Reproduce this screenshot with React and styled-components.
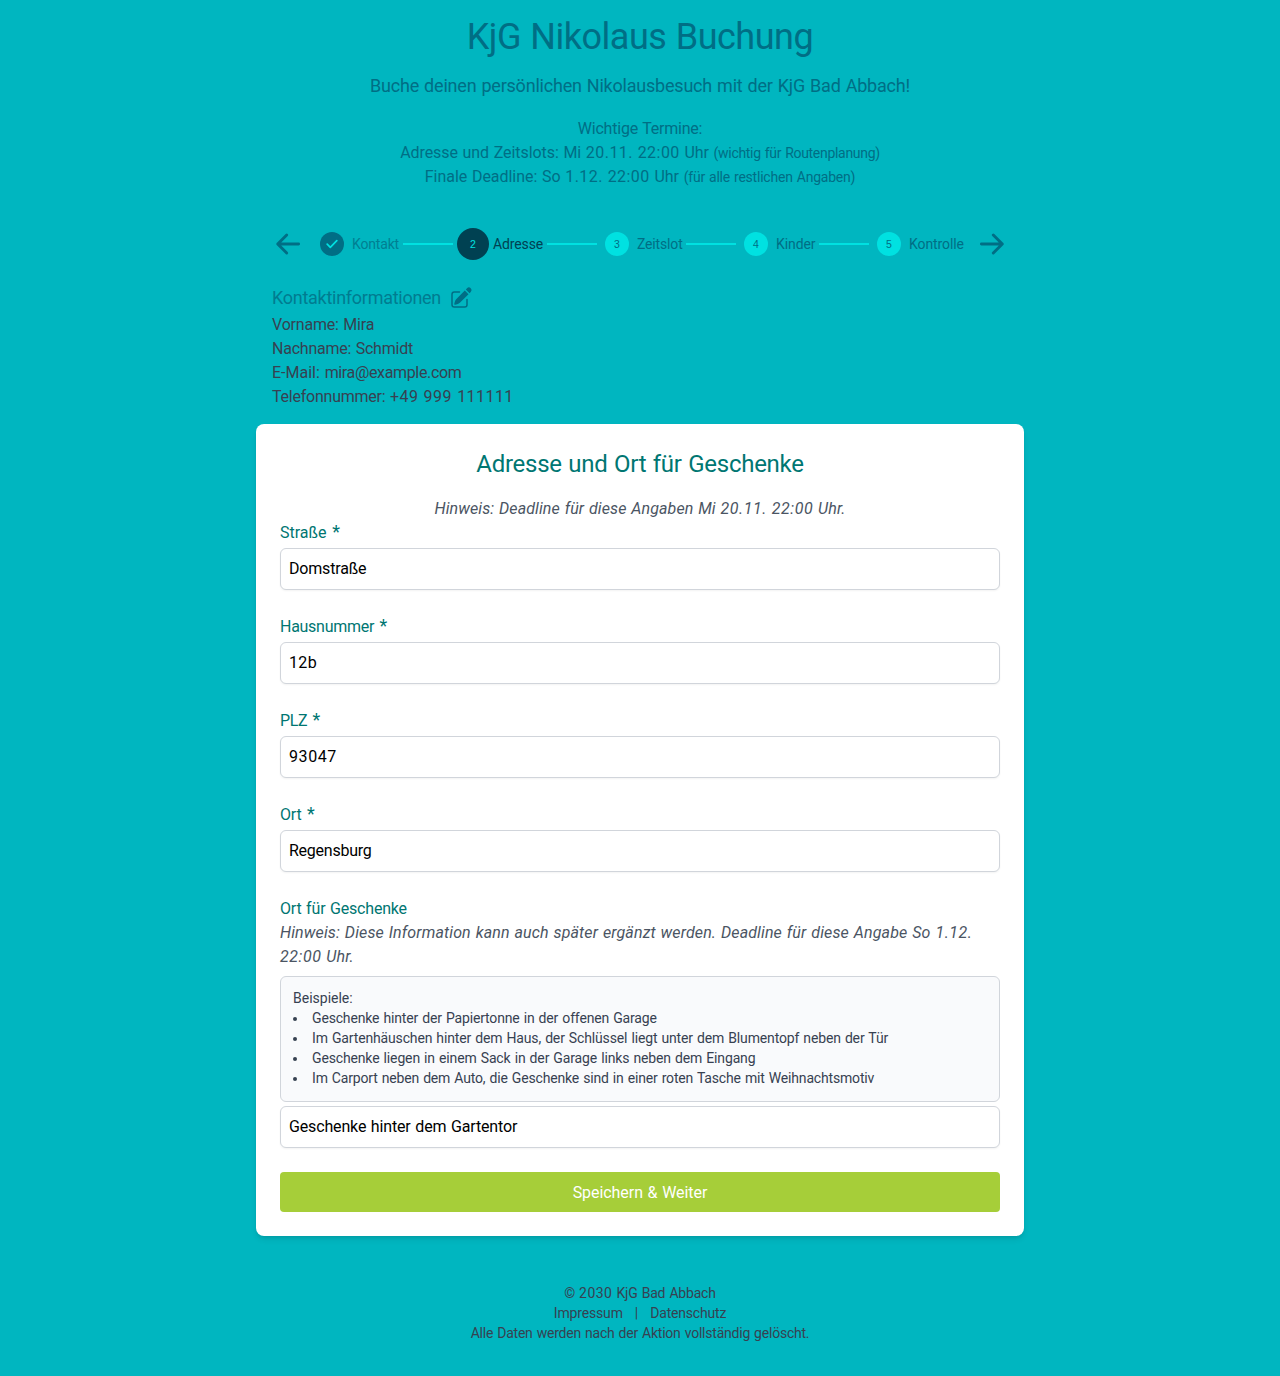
import React from 'react';
import styled, { createGlobalStyle, css } from 'styled-components';
import { HiPencilSquare } from 'react-icons/hi2';

const Global = createGlobalStyle`
  *, *::before, *::after { box-sizing: border-box; }
  body {
    margin: 0;
    background: #00b6c0;
    font-family: Roboto, "Liberation Sans", sans-serif;
    font-size: 16px;
    line-height: 24px;
    word-spacing: 0.05em;
    color: #374151;
  }
  h1, h2, h3, p, ul { margin: 0; padding: 0; font-weight: 400; }
`;

const tracking = css`letter-spacing: ${(p) => p.$ls || 0}px;`;
const bodyLine = css`
  padding-top: 1px;
  margin-bottom: -1px;
`;

const Page = styled.div`
  display: flex;
  flex-direction: column;
  align-items: center;
  min-height: 1376px;
  padding-top: 16px;
`;
const Header = styled.header`
  text-align: center;
  color: #006e85;
`;
const Title = styled.h1`
  ${bodyLine}
  font-size: 36px;
  line-height: 40px;
  ${tracking}
`;
const Subtitle = styled.p`
  margin: 16px 0;
  font-size: 18px;
  line-height: 28px;
  ${tracking}
`;
const Line = styled.p`
  && { ${bodyLine} }
  ${tracking}
`;
const Small = styled.span`
  font-size: 14px;
  ${tracking}
`;
const Track = styled.span`${tracking}`;
const Num = styled.span`letter-spacing: ${(p) => p.$ls ?? 0.55}px;`;

const Main = styled.main`
  width: 768px;
  margin-top: 40px;
`;
const Stepper = styled.nav`
  display: flex;
  align-items: center;
  justify-content: space-between;
  height: 32px;
  padding: 0 16px;
`;
const ArrowButton = styled.button`
  display: flex;
  width: 32px;
  height: 32px;
  padding: 0;
  border: 0;
  background: none;
  color: #006e85;
  transform: ${(p) => (p.$flip ? 'scaleX(-1)' : 'none')};
`;
const Steps = styled.div`
  display: flex;
  align-items: center;
  gap: 4px;
`;
const dotStyles = {
  done: css`width: 24px; height: 24px; margin: 0 4px; background: #006e85; color: #00e1e1;`,
  active: css`width: 32px; height: 32px; background: #004152; color: #00e1e1;`,
  open: css`width: 24px; height: 24px; margin: 0 4px; background: #00e1e1; color: #006e85;`,
};
const Dot = styled.span`
  display: flex;
  align-items: center;
  justify-content: center;
  border-radius: 50%;
  font: 10.5px/16px "Liberation Sans", sans-serif;
  ${(p) => dotStyles[p.$state]}
`;
const StepLabel = styled.span`
  width: ${(p) => p.$w}px;
  font-size: 14px;
  line-height: 20px;
  white-space: nowrap;
  color: ${(p) => (p.$state === 'active' ? '#004152' : p.$state === 'done' ? '#007f92' : '#006e85')};
  ${tracking}
`;
const Connector = styled.span`
  width: 50px;
  height: 2px;
  background: #00e1e1;
`;

const Contact = styled.section`padding: 24px 16px 16px;`;
const ContactHead = styled.div`
  display: flex;
  align-items: center;
  gap: 8px;
  height: 28px;
  color: #006e85;
`;
const ContactTitle = styled.h3`
  font-size: 18px;
  line-height: 28px;
  color: #007c90;
  ${tracking}
`;

const Card = styled.section`
  padding: 24px;
  border-radius: 8px;
  background: #fff;
  box-shadow: 0 4px 6px -1px rgba(0, 0, 0, 0.1), 0 2px 4px -2px rgba(0, 0, 0, 0.1);
`;
const CardTitle = styled.h2`
  margin-bottom: 16px;
  font-size: 24px;
  line-height: 32px;
  text-align: center;
  color: #007672;
  ${tracking}
`;
const Hint = styled.p`
  && { ${bodyLine} }
  font-style: italic;
  color: #4b5563;
  text-align: ${(p) => (p.$center ? 'center' : 'left')};
  ${tracking}
`;
const Field = styled.div`margin-bottom: 24px;`;
const Label = styled.label`
  display: block;
  ${bodyLine}
  color: #007672;
  ${tracking}
`;
const Star = styled.span`
  margin-left: 1px;
  font-size: 18px;
  line-height: 0;
`;
const Input = styled.input`
  display: block;
  width: 100%;
  height: 42px;
  margin-top: 4px;
  padding: 0 8px 1px;
  border: 1px solid #d1d5db;
  border-radius: 6px;
  background: #fff;
  box-shadow: 0 1px 2px rgba(0, 0, 0, 0.05);
  color: #000;
  font: inherit;
  word-spacing: 0.05em;
  outline: 0;
  ${tracking}
`;
const Examples = styled.div`
  margin-top: 8px;
  padding: 11px 12px 13px;
  border: 1px solid #d1d5db;
  border-radius: 6px;
  background: #f9fafc;
  font-size: 14px;
  line-height: 20px;
  ${tracking}
`;
const List = styled.ul`list-style: disc inside;`;
const Item = styled.li`${tracking}`;
const Submit = styled.button`
  display: block;
  width: 100%;
  height: 40px;
  padding: 2px 0 0;
  border: 0;
  border-radius: 4px;
  background: #a6ce39;
  color: #fff;
  font: inherit;
  word-spacing: 0.05em;
  ${tracking}
`;

const Footer = styled.footer`
  padding: 47px 0 33px;
  text-align: center;
  font-size: 14px;
  line-height: 20px;
`;
const FooterLine = styled.p`${tracking}`;
const FooterLinks = styled.div`
  display: flex;
  justify-content: center;
  gap: 12px;
`;

const Arrow = ({ flip, label }) => (
  <ArrowButton $flip={flip} aria-label={label}>
    <svg width="32" height="32" viewBox="0 0 32 32" fill="none" stroke="currentColor" strokeWidth="2.9" strokeLinecap="round" strokeLinejoin="round">
      <path d="M26.6 16H5.8M14.7 7 5.7 16l9 9" />
    </svg>
  </ArrowButton>
);

const steps = [
  { label: 'Kontakt', w: 47, ls: -0.17, state: 'done' },
  { label: 'Adresse', w: 50, ls: -0.13, state: 'active' },
  { label: 'Zeitslot', w: 45, ls: -0.16, state: 'open' },
  { label: 'Kinder', w: 39, ls: -0.08, state: 'open' },
  { label: 'Kontrolle', w: 55, ls: -0.1, state: 'open' },
];

const fields = [
  { label: 'Straße', ls: 0, value: 'Domstraße', vls: -0.18 },
  { label: 'Hausnummer', ls: -0.28, value: '12b', vls: 0.35 },
  { label: 'PLZ', ls: -0.4, value: '93047', vls: 0.6 },
  { label: 'Ort', ls: -0.2, value: 'Regensburg', vls: -0.24 },
];

const examples = [
  ['Geschenke hinter der Papiertonne in der offenen Garage', -0.16],
  ['Im Gartenhäuschen hinter dem Haus, der Schlüssel liegt unter dem Blumentopf neben der Tür', -0.15],
  ['Geschenke liegen in einem Sack in der Garage links neben dem Eingang', -0.145],
  ['Im Carport neben dem Auto, die Geschenke sind in einer roten Tasche mit Weihnachtsmotiv', -0.172],
];

export default function App() {
  return (
    <Page>
      <Global />
      <Header>
        <Title $ls={-0.48}>KjG Nikolaus Buchung</Title>
        <Subtitle $ls={-0.21}>Buche deinen persönlichen Nikolausbesuch mit der KjG Bad Abbach!</Subtitle>
        <Line $ls={-0.22}>Wichtige Termine:</Line>
        <Line $ls={-0.07}>
          Adresse und Zeitslots: Mi <Num $ls={0.45}>20.11.</Num> <Num $ls={0.45}>22:00</Num> Uhr <Small $ls={-0.3}>(wichtig für Routenplanung)</Small>
        </Line>
        <Line $ls={-0.04}>
          Finale Deadline: So <Num $ls={0.45}>1.12.</Num> <Num $ls={0.45}>22:00</Num> Uhr <Small $ls={-0.22}>(für alle restlichen Angaben)</Small>
        </Line>
      </Header>

      <Main>
        <Stepper>
          <Arrow label="Zurück" />
          <Steps>
            {steps.map((s, i) => (
              <React.Fragment key={s.label}>
                {i > 0 && <Connector />}
                <Dot $state={s.state}>
                  {s.state === 'done' ? (
                    <svg width="12" height="12" viewBox="0 0 12 12" fill="none" stroke="currentColor" strokeWidth="1.7" strokeLinecap="round" strokeLinejoin="round">
                      <path d="M1.2 6.2 4.3 9.3 10.8 2.7" />
                    </svg>
                  ) : (
                    i + 1
                  )}
                </Dot>
                <StepLabel $w={s.w} $ls={s.ls} $state={s.state}>{s.label}</StepLabel>
              </React.Fragment>
            ))}
          </Steps>
          <Arrow flip label="Weiter" />
        </Stepper>

        <Contact>
          <ContactHead>
            <ContactTitle $ls={-0.27}>Kontaktinformationen</ContactTitle>
            <HiPencilSquare size={24} />
          </ContactHead>
          <Line $ls={-0.2}>Vorname: Mira</Line>
          <Line $ls={-0.23}>Nachname: Schmidt</Line>
          <Line>E-Mail: <Track $ls={-0.35}>mira@example.com</Track></Line>
          <Line $ls={-0.23}>Telefonnummer: <Num $ls={0.45}>+49 999 111111</Num></Line>
        </Contact>

        <Card>
          <CardTitle $ls={-0.26}>Adresse und Ort für Geschenke</CardTitle>
          <Hint $center $ls={0.1}>
            Hinweis: Deadline für diese Angaben Mi <Num>20.11.</Num> <Num>22:00</Num> Uhr.
          </Hint>
          {fields.map((f) => (
            <Field key={f.label}>
              <Label $ls={f.ls}>{f.label} <Star>*</Star></Label>
              <Input defaultValue={f.value} $ls={f.vls} />
            </Field>
          ))}
          <Field>
            <Label $ls={-0.18}>Ort für Geschenke</Label>
            <Hint $ls={0.13}>
              Hinweis: Diese Information kann auch später ergänzt werden. Deadline für diese Angabe So <Num>1.12.</Num> <Num>22:00</Num> Uhr.
            </Hint>
            <Examples>
              Beispiele:
              <List>
                {examples.map(([text, ls]) => (
                  <Item key={text} $ls={ls}>{text}</Item>
                ))}
              </List>
            </Examples>
            <Input defaultValue="Geschenke hinter dem Gartentor" $ls={-0.15} />
          </Field>
          <Submit $ls={-0.06}>Speichern &amp; Weiter</Submit>
        </Card>
      </Main>

      <Footer>
        <FooterLine $ls={-0.19}>© <Num $ls={0.45}>2030</Num> KjG Bad Abbach</FooterLine>
        <FooterLinks>
          <Track $ls={-0.16}>Impressum</Track>
          <span>|</span>
          <Track $ls={-0.19}>Datenschutz</Track>
        </FooterLinks>
        <FooterLine $ls={-0.22}>Alle Daten werden nach der Aktion vollständig gelöscht.</FooterLine>
      </Footer>
    </Page>
  );
}
